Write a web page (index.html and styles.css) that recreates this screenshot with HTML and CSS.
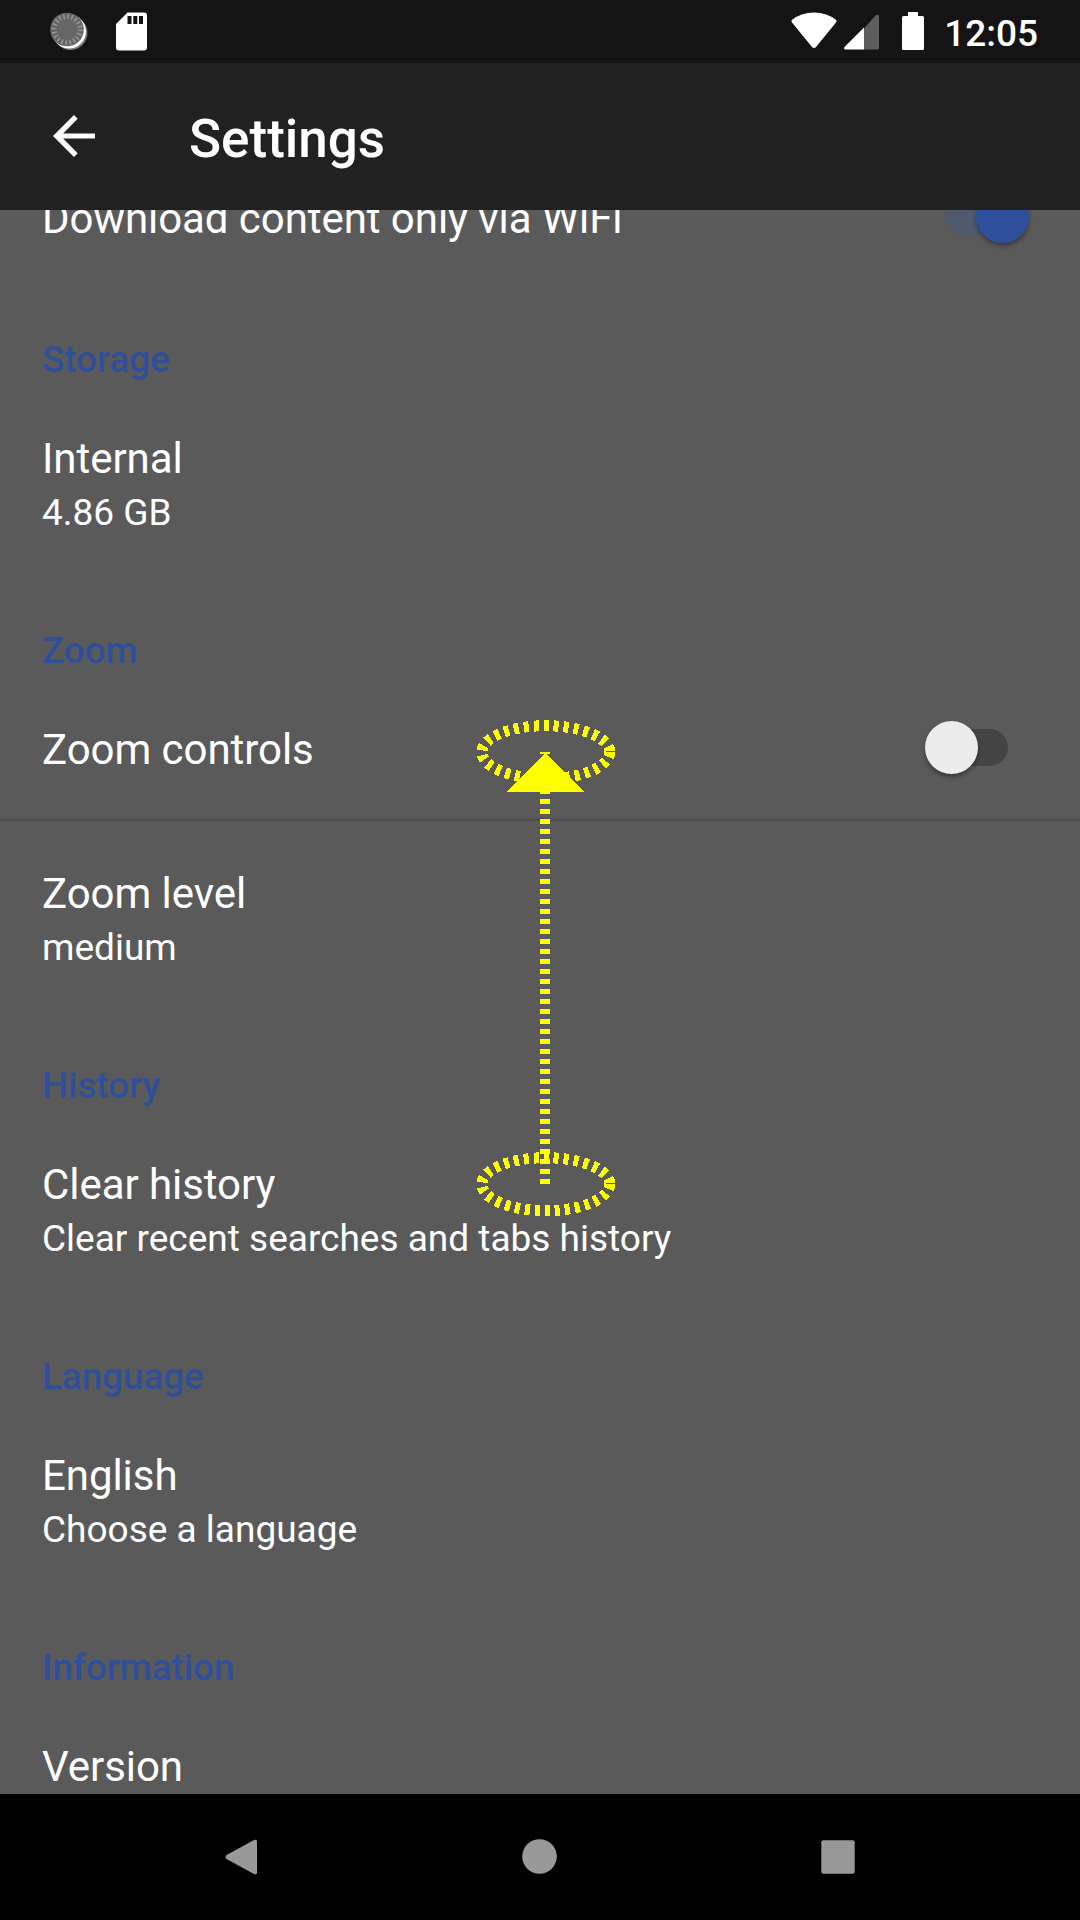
FILE: index.html
```html
<!DOCTYPE html>
<html lang="en">
<head>
<meta charset="utf-8">
<title>Settings</title>
<link rel="stylesheet" href="styles.css">
</head>
<body>
<div class="screen">
  <header class="status">
    <svg class="spinner" viewBox="0 0 38 38"><circle cx="20.500" cy="21" r="17" fill="#777"/><circle cx="19" cy="19.500" r="17" fill="#fff"/><circle cx="17" cy="17.500" r="16.800" fill="#666"/><circle cx="17" cy="17.500" r="13" fill="none" stroke="#999" stroke-width="5" stroke-dasharray="1.400 2.684"/></svg>
    <svg class="sdcard" viewBox="0 0 31 39"><path fill="#fff" fill-rule="evenodd" d="M11.500 0.500H28Q31 0.500 31 3.500V35.500Q31 38.500 28 38.500H3Q0 38.500 0 35.500V12ZM11.500 4V12H15.500V4ZM17.300 4V12H21.300V4ZM23 4V12H27V4Z"/></svg>
    <div class="system">
      <svg class="wifi" viewBox="0 0 46 37"><path fill="#fff" d="M0.800 8Q10 0.500 23 0.500T45.200 8Q46 9 45 10.500L25 35Q23 37 21 35L1 10.500Q0 9 0.800 8Z"/></svg>
      <svg class="signal" viewBox="0 0 35 36"><path fill="#5d5d5d" d="M20 14.500L32 1Q35 0 35 2V34Q35 35.500 33 35.500H20Z"/><path fill="#fff" d="M20 13.500V35.500H1.500Q-.5 35.500 .5 33Z"/></svg>
      <svg class="battery" viewBox="0 0 22 38"><path fill="#fff" d="M6 0H16V4H20.500Q22 4 22 5.500V36.500Q22 38 20.500 38H1.500Q0 38 0 36.500V5.500Q0 4 1.500 4H6Z"/></svg>
      <span class="clock">12:05</span>
    </div>
  </header>
  <div class="toolbar">
    <svg class="back" viewBox="0 0 42 42"><path fill="#fff" d="M42 18.400H10.100L24.700 3.700L21 0L0 21L21 42L24.700 38.300L10.100 23.600H42Z"/></svg>
    <h1>Settings</h1>
  </div>
  <main class="prefs">
    <div class="pref clipped switchable"><div class="title">Download content only via WiFi</div><div class="switch on"></div></div>
    <h2>Storage</h2>
    <div class="pref"><div class="title">Internal</div><div class="summary">4.86 GB</div></div>
    <h2>Zoom</h2>
    <div class="pref switchable"><div class="title">Zoom controls</div><div class="switch"></div></div>
    <div class="pref divided"><div class="title">Zoom level</div><div class="summary">medium</div></div>
    <h2>History</h2>
    <div class="pref"><div class="title">Clear history</div><div class="summary">Clear recent searches and tabs history</div></div>
    <h2>Language</h2>
    <div class="pref"><div class="title">English</div><div class="summary">Choose a language</div></div>
    <h2>Information</h2>
    <div class="pref"><div class="title">Version</div></div>
  </main>
  <nav class="navbar">
    <svg viewBox="0 0 36 36"><path fill="#999" d="M30 1Q33 0 33 2.500V33.500Q33 36 30 35L2.500 20Q.5 18 2.500 16Z"/></svg>
    <svg viewBox="0 0 36 36"><circle cx="17.500" cy="17.500" r="17.300" fill="#999"/></svg>
    <svg viewBox="0 0 36 36"><rect x="1.300" y="1.300" width="33.400" height="33.400" rx="2" fill="#999"/></svg>
  </nav>
  <svg class="gesture" viewBox="470 710 150 520" shape-rendering="crispEdges">
    <g fill="none" stroke="#ff0" stroke-width="11" stroke-dasharray="5 5">
      <ellipse cx="545.800" cy="752.200" rx="64" ry="26.500"/>
      <ellipse cx="545.800" cy="1184.200" rx="64" ry="26.500"/>
      <path stroke-width="10" d="M545 1184V752"/>
    </g>
    <path fill="#ff0" d="M545 753L584 792H506Z"/>
  </svg>
</div>
</body>
</html>
```
FILE: styles.css
```css
* { box-sizing: border-box; }
body { margin: 0; background: #000; }
svg { display: block; flex: none; }
.screen {
  position: relative;
  display: flex;
  flex-direction: column;
  width: 1080px;
  height: 1920px;
  overflow: hidden;
  font-family: Roboto, sans-serif;
  color: #fff;
}
.status {
  display: flex;
  align-items: flex-start;
  flex: 0 0 63px;
  padding: 12px 42px 0 50px;
  background: #141414;
}
.spinner { width: 38px; height: 38px; }
.sdcard { width: 31px; height: 39px; margin-left: 28px; }
.system { display: flex; margin-left: auto; }
.wifi { width: 46px; height: 37px; }
.signal { width: 35px; height: 36px; margin: 2px 0 0 7px; }
.battery { width: 22px; height: 38px; margin-left: 23px; }
.clock { margin-left: 20px; font-size: 37px; line-height: 43px; font-weight: 500; }
.toolbar {
  display: flex;
  align-items: center;
  flex: 0 0 147px;
  padding: 0 0 1px 53px;
  background: #212121;
}
.back { width: 42px; height: 42px; }
h1 { margin: 5px 0 0 94px; font-size: 53px; line-height: 62px; font-weight: 500; }
.prefs {
  flex: 0 0 1584px;
  overflow: hidden;
  background: #5a5a5a;
}
h2 {
  margin: 0;
  padding: 68px 42px 2px;
  font-size: 36.75px;
  line-height: 43px;
  font-weight: 500;
  color: #304f9b;
}
.pref { padding: 51px 42px 27px; }
.title { font-size: 42px; line-height: 49px; letter-spacing: -0.06px; }
.summary { margin-top: 8px; font-size: 37px; line-height: 43px; }
.switchable {
  display: flex;
  justify-content: space-between;
  height: 144px;
  padding-right: 72px;
}
.clipped { height: 127px; margin-top: -67px; }
.divided { box-shadow: inset 0 3px #505050; }
.switch {
  display: flex;
  align-items: center;
  width: 62px;
  height: 37px;
  margin-top: 4px;
  border-radius: 19px;
  background: #444;
}
.switch::before {
  content: "";
  flex: none;
  width: 53px;
  height: 53px;
  margin-left: -21px;
  border-radius: 50%;
  background: #ececec;
  box-shadow: 0 3px 4px rgba(0, 0, 0, .35);
}
.switch.on { background: #4f5970; }
.switch.on::before { margin-left: 30px; background: #304f9b; }
.navbar {
  display: flex;
  justify-content: space-between;
  align-items: center;
  flex: 0 0 126px;
  padding: 0 224px 0 224px;
  background: #000;
}
.navbar svg { width: 36px; height: 36px; }
.gesture {
  position: absolute;
  left: 470px;
  top: 710px;
  width: 150px;
  height: 520px;
}
```
